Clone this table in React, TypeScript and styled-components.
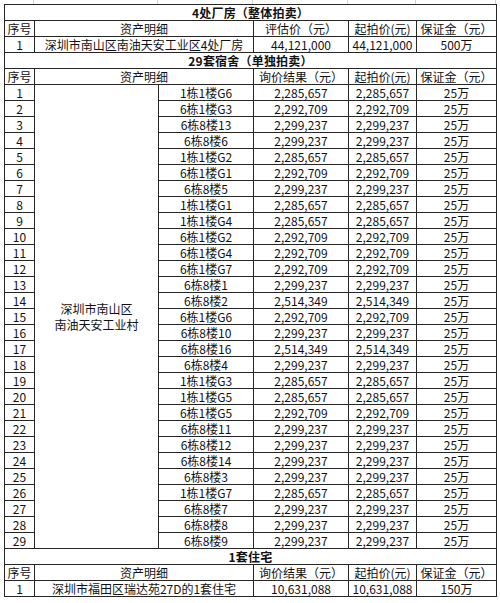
import React from 'react';
import styled, { createGlobalStyle } from 'styled-components';

const GlobalStyle = createGlobalStyle`
  html, body {
    margin: 0;
    padding: 0;
    background: #fff;
  }
  body {
    font-family: "Noto Sans CJK SC", "Noto Sans", sans-serif;
    color: #111;
  }
`;

const COLS = [30, 124, 95, 95, 68, 80];

const Page = styled.div`
  width: 500px;
  padding: 0 4px 0 4px;
  box-sizing: border-box;
`;

// faint spreadsheet grid peeking above the table
const SheetEdge = styled.div`
  display: grid;
  grid-template-columns: ${COLS.map(c => `${c}px`).join(' ')};
  height: 4px;
  & > span {
    border-right: 1px solid #d4d4d4;
  }
`;

const Sheet = styled.table`
  border-collapse: collapse;
  table-layout: fixed;
  width: ${COLS.reduce((a, b) => a + b, 0) + 1}px;
  font-size: 12px;
`;

const Row = styled.tr`
  height: 16px;
`;

const Cell = styled.td<{ $bold?: boolean }>`
  border: 1px solid #262626;
  padding: 0;
  height: 15px;
  line-height: 15px;
  text-align: center;
  white-space: nowrap;
  overflow: hidden;
  font-weight: ${p => (p.$bold ? 700 : 400)};
  letter-spacing: ${p => (p.$bold ? '0.2px' : '0')};
`;

const MergedCell = styled(Cell)`
  white-space: normal;
  line-height: 16px;
  vertical-align: middle;
`;

const dorms: [string, string, string][] = [
  ['1栋1楼G6', '2,285,657', '2,285,657'],
  ['6栋1楼G3', '2,292,709', '2,292,709'],
  ['6栋8楼13', '2,299,237', '2,299,237'],
  ['6栋8楼6', '2,299,237', '2,299,237'],
  ['1栋1楼G2', '2,285,657', '2,285,657'],
  ['6栋1楼G1', '2,292,709', '2,292,709'],
  ['6栋8楼5', '2,299,237', '2,299,237'],
  ['1栋1楼G1', '2,285,657', '2,285,657'],
  ['1栋1楼G4', '2,285,657', '2,285,657'],
  ['6栋1楼G2', '2,292,709', '2,292,709'],
  ['6栋1楼G4', '2,292,709', '2,292,709'],
  ['6栋1楼G7', '2,292,709', '2,292,709'],
  ['6栋8楼1', '2,299,237', '2,299,237'],
  ['6栋8楼2', '2,514,349', '2,514,349'],
  ['6栋1楼G6', '2,292,709', '2,292,709'],
  ['6栋8楼10', '2,299,237', '2,299,237'],
  ['6栋8楼16', '2,514,349', '2,514,349'],
  ['6栋8楼4', '2,299,237', '2,299,237'],
  ['1栋1楼G3', '2,285,657', '2,285,657'],
  ['1栋1楼G5', '2,285,657', '2,285,657'],
  ['6栋1楼G5', '2,292,709', '2,292,709'],
  ['6栋8楼11', '2,299,237', '2,299,237'],
  ['6栋8楼12', '2,299,237', '2,299,237'],
  ['6栋8楼14', '2,299,237', '2,299,237'],
  ['6栋8楼3', '2,299,237', '2,299,237'],
  ['1栋1楼G7', '2,285,657', '2,285,657'],
  ['6栋8楼7', '2,299,237', '2,299,237'],
  ['6栋8楼8', '2,299,237', '2,299,237'],
  ['6栋8楼9', '2,299,237', '2,299,237'],
];

const SectionTitle: React.FC<{ children: React.ReactNode }> = ({ children }) => (
  <Row>
    <Cell $bold colSpan={6}>{children}</Cell>
  </Row>
);

const HeaderRow: React.FC<{ priceLabel: string }> = ({ priceLabel }) => (
  <Row>
    <Cell>序号</Cell>
    <Cell colSpan={2}>资产明细</Cell>
    <Cell>{priceLabel}</Cell>
    <Cell>起拍价(元)</Cell>
    <Cell>保证金（元）</Cell>
  </Row>
);

const App: React.FC = () => {
  return (
    <Page>
      <GlobalStyle />
      <SheetEdge>
        {COLS.map((_, i) => <span key={i} />)}
      </SheetEdge>
      <Sheet>
        <colgroup>
          {COLS.map((w, i) => <col key={i} style={{ width: w }} />)}
        </colgroup>
        <tbody>
          <SectionTitle>4处厂房（整体拍卖）</SectionTitle>
          <HeaderRow priceLabel="评估价（元）" />
          <Row>
            <Cell>1</Cell>
            <Cell colSpan={2}>深圳市南山区南油天安工业区4处厂房</Cell>
            <Cell>44,121,000</Cell>
            <Cell>44,121,000</Cell>
            <Cell>500万</Cell>
          </Row>

          <SectionTitle>29套宿舍（单独拍卖）</SectionTitle>
          <HeaderRow priceLabel="询价结果（元）" />
          {dorms.map(([unit, quote, start], i) => (
            <Row key={unit}>
              <Cell>{i + 1}</Cell>
              {i === 0 && (
                <MergedCell rowSpan={dorms.length}>
                  深圳市南山区
                  <br />
                  南油天安工业村
                </MergedCell>
              )}
              <Cell>{unit}</Cell>
              <Cell>{quote}</Cell>
              <Cell>{start}</Cell>
              <Cell>25万</Cell>
            </Row>
          ))}

          <SectionTitle>1套住宅</SectionTitle>
          <HeaderRow priceLabel="询价结果（元）" />
          <Row>
            <Cell>1</Cell>
            <Cell colSpan={2}>深圳市福田区瑞达苑27D的1套住宅</Cell>
            <Cell>10,631,088</Cell>
            <Cell>10,631,088</Cell>
            <Cell>150万</Cell>
          </Row>
        </tbody>
      </Sheet>
    </Page>
  );
};

export default App;
